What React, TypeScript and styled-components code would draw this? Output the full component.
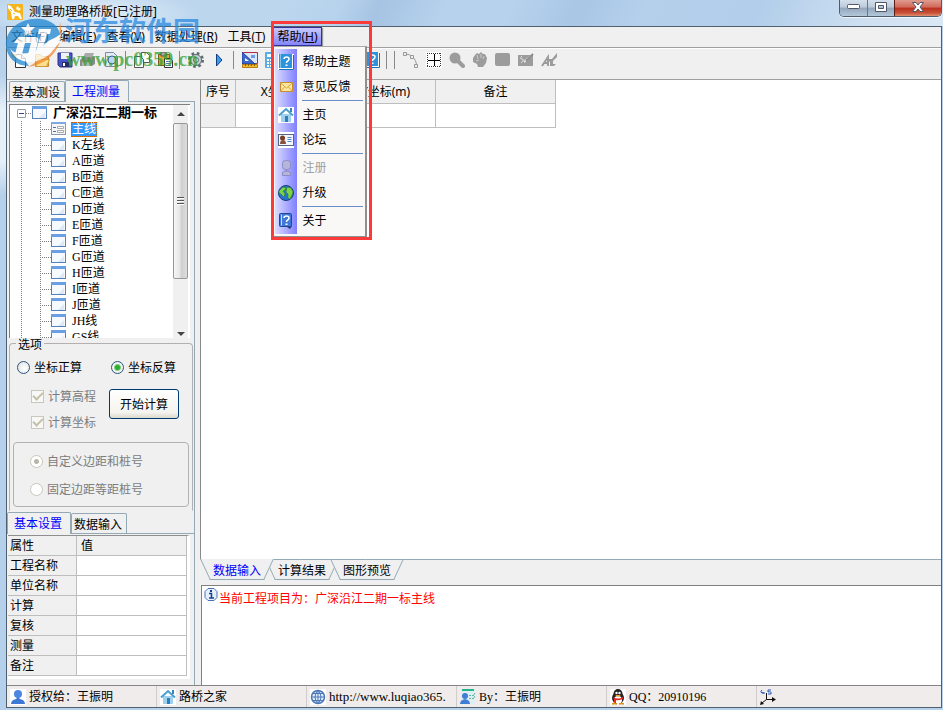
import React from "react";
import styled, { createGlobalStyle, css } from "styled-components";

const song = `"Liberation Serif", "Noto Sans CJK SC", serif`;
const hei = `"Noto Sans CJK SC", sans-serif`;
const ui = `"Noto Sans", "Noto Sans CJK SC", sans-serif`;
const face = "#f0f0f0";
const edge = "#93a9b5";

const Global = createGlobalStyle`
  * { box-sizing: border-box; }
  html, body { margin: 0; padding: 0; }
  body { font: 12px/16px ${ui}; color: #000; overflow: hidden; }
  button, input { font: inherit; color: inherit; margin: 0; padding: 0; }
  button { background: none; border: 0; white-space: nowrap; }
  ul { margin: 0; padding: 0; list-style: none; }
  svg { display: block; flex: none; }
`;

/* ---------- window frame ---------- */

const Glass = styled.div`
  position: relative;
  display: flex;
  flex-direction: column;
  height: 100vh;
  padding: 0 1px 2px 6px;
  background:
    linear-gradient(180deg, #b9d1ea00 0 75px, #e6f0f9 110px 160px, #b4d0ea 196px) 0 0 / 6px 100% no-repeat,
    #b9d2eb;
`;

const TitleBar = styled.header`
  display: flex;
  align-items: flex-start;
  height: 26px;
  margin: 0 -1px 0 -6px;
  padding-left: 7px;
  background:
    radial-gradient(ellipse 110px 24px at 90px 14px, #ffffffa0, #ffffff00),
    linear-gradient(115deg, #bcd6ee 0 30%, #b6d2ec 36%, #a6c4e3 40%, #b6d2ec 47%, #b6d2ec 54%, #a9c7e6 61%, #b4d0eb 68%, #b2ceea 80%, #cfe0f1 92%, #dbe8f5);
`;

const Title = styled.h1`
  flex: 1;
  margin: 0;
  padding: 3px 0 0 6px;
  font: 12px/18px ${ui};
`;

const AppLogo = styled.div`
  padding-top: 4px;
`;

const Caption = styled.div`
  display: flex;
  height: 17px;
  margin-right: 1px;
  border: 1px solid #4d5d70;
  border-top: 0;
  border-radius: 0 0 5px 5px;
  overflow: hidden;
  box-shadow: 0 1px 0 #ffffffb0;
`;

const CaptionButton = styled.button<{ $close?: boolean }>`
  display: grid;
  place-items: center;
  width: ${(p) => (p.$close ? 47 : 27)}px;
  padding-bottom: 2px;
  border-left: 1px solid ${(p) => (p.$close ? "#5f1d18" : "#68788c")};
  background: ${(p) =>
    p.$close
      ? "linear-gradient(#e09c8f, #d0695a 45%, #b9301b 50%, #c85038 80%, #e08f70)"
      : "linear-gradient(#d3e0ec, #bccada 45%, #93a6bb 50%, #b4c8db)"};
  &:first-child { border-left: 0; }
`;

const Client = styled.div`
  flex: 1;
  min-height: 0;
  display: flex;
  flex-direction: column;
  border: 1px solid #51606f;
  background: ${face};
`;

/* ---------- menu ---------- */

const MenuBar = styled.nav`
  display: flex;
  height: 21px;
  margin-left: -1px;
  border-bottom: 1px solid #a0a0a0;
`;

const MenuSlot = styled.div<{ $open?: boolean }>`
  position: relative;
  margin-left: ${(p) => (p.$open ? 3 : 0)}px;
`;

const MenuButton = styled.button<{ $open?: boolean }>`
  height: 19px;
  padding: 0 5px;
  line-height: 18px;
  ${(p) =>
    p.$open &&
    css`
      padding: 0 3px;
      border: 1px solid #31319c;
      background: linear-gradient(#c9c9ff, #8484f7);
      box-shadow: 1px 1px 1px #999;
      line-height: 16px;
    `}
`;

const Popup = styled.div`
  position: absolute;
  z-index: 5;
  top: 19px;
  left: 0;
  width: 94px;
  padding: 2px 2px 3px;
  border: 1px solid #a9a9a9;
  border-right: 2px solid #8f8f8f;
  border-bottom: 2px solid #8f8f8f;
  background: linear-gradient(90deg, #dcdcff, #7f7fff) 1px 2px / 22px calc(100% - 4px) no-repeat, #f9f8f7;
`;

const PopupItem = styled.button<{ $off?: boolean }>`
  display: flex;
  align-items: center;
  gap: 8px;
  width: 100%;
  height: 25px;
  padding-left: 2px;
  color: ${(p) => (p.$off ? "#a0a0a0" : "#000")};
`;

const PopupRule = styled.div`
  height: 3px;
  margin-left: 26px;
  background: linear-gradient(#6a8ccb, #6a8ccb) 0 1px / 100% 1px no-repeat;
`;

const Callout = styled.div`
  position: absolute;
  z-index: 6;
  top: -6px;
  left: -2px;
  width: 101px;
  height: 219px;
  border: 3px solid #fb3a3a;
  pointer-events: none;
`;

/* ---------- toolbar ---------- */

const ToolBar = styled.div`
  display: flex;
  align-items: center;
  height: 32px;
  padding-bottom: 8px;
  border-top: 1px solid #fff;
  border-bottom: 1px solid #a0a0a0;
`;

const Tool = styled.button`
  display: grid;
  place-items: center;
  width: 23px;
  height: 22px;
`;

const ToolRule = styled.span`
  width: 8px;
  height: 18px;
  background: linear-gradient(#8a8a8a, #8a8a8a) 3px 0 / 1px 100% no-repeat;
`;

const ToolGap = styled.span`
  width: 76px;
`;

/* ---------- main ---------- */

const Main = styled.main`
  flex: 1;
  min-height: 0;
  display: flex;
`;

const Side = styled.aside`
  display: flex;
  flex-direction: column;
  width: 188px;
  margin-right: 5px;
  border-right: 1px solid ${edge};
`;

const Tabs = styled.div<{ $lower?: boolean }>`
  display: flex;
  align-items: flex-end;
  height: ${(p) => (p.$lower ? 23 : 22)}px;
  padding-left: ${(p) => (p.$lower ? 0 : 2)}px;
  margin-right: ${(p) => (p.$lower ? 0 : -1)}px;
  background: linear-gradient(${edge}, ${edge}) 0 100% / 100% 1px no-repeat ${face};
`;

const Tab = styled.button<{ $on?: boolean }>`
  height: ${(p) => (p.$on ? 22 : 20)}px;
  padding: ${(p) => (p.$on ? "0 8px 1px 6px" : "0 4px 0 2px")};
  margin-bottom: ${(p) => (p.$on ? 0 : 1)}px;
  border: 1px solid ${edge};
  border-bottom: 0;
  border-radius: 2px 2px 0 0;
  background: ${face};
  color: ${(p) => (p.$on ? "#0000ff" : "#000")};
  font-family: ${hei};
`;

const TreeBox = styled.div`
  flex: 1;
  min-height: 0;
  display: flex;
  margin: 2px 4px 0 2px;
  border-left: 1px solid #808080;
  border-top: 1px solid #808080;
  background: #fff;
`;

const Tree = styled.ul`
  flex: 1;
  overflow: hidden;
  font-family: ${song};
`;

const TreeRow = styled.li`
  display: flex;
  align-items: center;
  height: 16px;
`;

const dotsY = "repeating-linear-gradient(180deg, #808080 0 1px, transparent 1px 2px)";
const dotsX = "repeating-linear-gradient(90deg, #808080 0 1px, transparent 1px 2px)";

const Guide = styled.span<{ $kind: "line" | "arm" | "root" }>`
  width: ${(p) => (p.$kind === "line" ? 30 : p.$kind === "arm" ? 11 : 6)}px;
  height: 16px;
  background: ${(p) =>
    p.$kind === "line"
      ? `${dotsY} 11px 0 / 1px 100% no-repeat`
      : p.$kind === "arm"
        ? `${dotsY} 0 0 / 1px 100% no-repeat, ${dotsX} 0 8px / 100% 1px no-repeat`
        : `${dotsX} 0 8px / 100% 1px no-repeat`};
`;

const Expander = styled.button`
  display: grid;
  place-items: center;
  width: 9px;
  height: 9px;
  margin-left: 7px;
  border: 1px solid #8f9aa5;
  border-radius: 1px;
  background: #fff;
  &::after { content: ""; width: 5px; height: 1px; background: #33449a; }
`;

const Node = styled.button<{ $root?: boolean; $on?: boolean }>`
  height: 15px;
  margin-left: 4px;
  padding: 0 1px;
  line-height: 14px;
  ${(p) => p.$root && css`font-weight: 700; font-size: 13px;`}
  ${(p) =>
    p.$on &&
    css`
      background: #3399ff;
      color: #fff;
      outline: 1px dotted #c86400;
      outline-offset: -1px;
    `}
`;

const Scroll = styled.div`
  display: flex;
  flex-direction: column;
  width: 15px;
  margin-right: 2px;
  background: #f0f0f0;
`;

const ScrollButton = styled.button<{ $down?: boolean }>`
  display: grid;
  place-items: center;
  height: ${(p) => (p.$down ? 8 : 18)}px;
  margin-top: ${(p) => (p.$down ? "auto" : 0)};
  &::after {
    content: "";
    border: 4px solid transparent;
    border-${(p) => (p.$down ? "top" : "bottom")}-color: #444;
    border-${(p) => (p.$down ? "bottom" : "top")}-width: 0;
  }
`;

const Thumb = styled.div`
  display: grid;
  place-items: center;
  height: 67%;
  border: 1px solid #989898;
  border-radius: 2px;
  background: linear-gradient(90deg, #f6f6f6, #e6e6e6 45%, #cfcfcf 55%, #dcdcdc);
  &::after {
    content: "";
    width: 7px;
    height: 8px;
    background: repeating-linear-gradient(180deg, #555 0 1px, #fff 1px 2px, transparent 2px 3px);
  }
`;

const Options = styled.fieldset`
  min-width: 0;
  margin: -2px 1px 0 2px;
  padding: 8px 3px 3px;
  border: 1px solid #b5b0b0;
  border-bottom-color: transparent;
  border-radius: 4px 4px 0 0;
  font-family: ${hei};
`;

const Legend = styled.legend`
  margin-left: 3px;
  padding: 0 2px;
  line-height: 15px;
`;

const Inner = styled.fieldset`
  display: flex;
  flex-direction: column;
  gap: 12px;
  margin: 12px 0 0;
  padding: 10px 0 9px 16px;
  border: 1px solid #b5b0b0;
  border-radius: 4px;
`;

const OptionRow = styled.div`
  display: flex;
  justify-content: space-between;
  padding: 0 13px 0 4px;
`;

const OptionBody = styled.div`
  display: flex;
  justify-content: space-between;
  align-items: flex-start;
  margin-top: 13px;
  padding: 0 10px 0 18px;
`;

const Stack = styled.div`
  display: flex;
  flex-direction: column;
  gap: 10px;
`;

const Choice = styled.label<{ $off?: boolean }>`
  display: flex;
  align-items: center;
  gap: 4px;
  height: 16px;
  white-space: nowrap;
  color: ${(p) => (p.$off ? "#7c7c7c" : "#000")};
`;

const Radio = styled.input.attrs({ type: "radio" })`
  appearance: none;
  width: 13px;
  height: 13px;
  border: 1px solid #2b5579;
  border-radius: 50%;
  background: radial-gradient(circle at 60% 60%, #fff, #dcdfe2);
  &:checked { background: radial-gradient(circle, #2eae2e 0 2px, #7fd07f 3px, #f4f4f4 4px); }
  &:disabled { border-color: #c9c7ba; background: #fff; }
  &:disabled:checked { background: radial-gradient(circle, #b9b6a8 0 2px, #fff 3px); }
`;

const Check = styled.input.attrs({ type: "checkbox" })`
  appearance: none;
  display: grid;
  place-items: center;
  width: 13px;
  height: 13px;
  border: 1px solid #c9c7ba;
  background: #f8f8f8;
  &:checked::after {
    content: "";
    width: 8px;
    height: 4px;
    border: solid #c6c1a5;
    border-width: 0 0 2px 2px;
    transform: translateY(-1px) rotate(-45deg);
  }
`;

const Run = styled.button`
  width: 70px;
  height: 30px;
  margin-top: 1px;
  border: 1px solid #003c74;
  border-radius: 3px;
  background: linear-gradient(#fff, #f4f3ee 80%, #dcd8cc);
`;

const Props = styled.table`
  width: 182px;
  margin: 1px 0 6px 1px;
  border: solid #fff;
  border-width: 0 3px 3px 0;
  border-top: 1px solid #8f8f8f;
  border-collapse: separate;
  border-spacing: 0;
  background: #fff;
  table-layout: fixed;
`;

const PropCell = styled.th<{ $value?: boolean; $head?: boolean }>`
  width: ${(p) => (p.$value ? "auto" : "69px")};
  height: 20px;
  padding: 0 ${(p) => (p.$value ? 4 : 2)}px;
  border: solid #bebebe;
  border-width: 0 1px 1px 0;
  background: ${(p) => (p.$value && !p.$head ? "#fff" : face)};
  font-weight: 400;
  line-height: 17px;
  text-align: left;
`;

const PropInput = styled.input`
  display: block;
  width: 100%;
  height: 17px;
  border: 0;
  background: transparent;
`;

/* ---------- work area ---------- */

const Work = styled.section`
  flex: 1;
  min-width: 0;
  display: flex;
  flex-direction: column;
`;

const SheetPane = styled.div`
  flex: 1;
  min-height: 0;
  border-left: 1px solid #8a8a8a;
  background: #fff;
`;

const Sheet = styled.table`
  border-collapse: separate;
  border-spacing: 0;
  table-layout: fixed;
  width: 355px;
`;

const Cell = styled.td<{ $w?: number; $face?: boolean }>`
  width: ${(p) => (p.$w ? `${p.$w}px` : "auto")};
  height: 24px;
  padding: 0;
  border: solid #bebebe;
  border-width: 0 1px 1px 0;
  background: ${(p) => (p.$face ? face : "#fff")};
  font-weight: 400;
  text-align: center;
`;

const PageTabs = styled.div`
  display: flex;
  height: 26px;
  padding-left: 5px;
  background: linear-gradient(${edge}, ${edge}) 0 0 / 100% 1px no-repeat;
`;

const PageTab = styled.button<{ $on?: boolean; $level: number }>`
  position: relative;
  z-index: ${(p) => p.$level};
  isolation: isolate;
  height: 21px;
  margin-right: 1px;
  padding: 0 8px;
  color: ${(p) => (p.$on ? "#0000ff" : "#000")};
  font-family: ${hei};
  &::before, &::after {
    content: "";
    position: absolute;
    z-index: -1;
    inset: 0 40% 0 0;
    border: solid ${edge};
    border-width: ${(p) => (p.$on ? 0 : 1)}px 0 1px 1px;
    background: ${face};
    transform: skewX(25deg);
  }
  &::after {
    inset: 0 0 0 40%;
    border-width: ${(p) => (p.$on ? 0 : 1)}px 1px 1px 0;
    transform: skewX(-25deg);
  }
`;

const Log = styled.div`
  display: flex;
  height: 100px;
  padding: 2px 1px;
  border-left: 1px solid #808080;
  border-top: 1px solid #808080;
  margin-left: 1px;
  background: #fff;
  color: #ff0000;
  font-family: ${hei};
`;

const LogText = styled.p`
  margin: 2px 0 0;
`;

/* ---------- status ---------- */

const Status = styled.footer`
  display: flex;
  height: 22px;
  border-top: 1px solid #858585;
  background: #f0eceb;
  font-family: ${song};
`;

const StatusCell = styled.div<{ $last?: boolean }>`
  display: flex;
  align-items: center;
  gap: 3px;
  flex: ${(p) => (p.$last ? "1" : "0 0 150px")};
  padding-left: 3px;
  overflow: hidden;
  white-space: nowrap;
  border-right: ${(p) => (p.$last ? 0 : 1)}px solid #cfcccb;
`;

const SiteLink = styled.a`
  color: #000;
  font-size: 13px;
  text-decoration: none;
`;

/* ---------- watermark ---------- */

const Mark = styled.div`
  position: absolute;
  z-index: 9;
  top: 13px;
  left: 5px;
  display: flex;
  gap: 3px;
  pointer-events: none;
  opacity: 0.75;
`;

const MarkText = styled.div`
  display: flex;
  flex-direction: column;
  padding-top: 3px;
  font: 700 27px/28px ${hei};
  color: #2a8ae0;
`;

const MarkSite = styled.span`
  padding-left: 1px;
  font: 700 20px/30px "Liberation Serif", serif;
  color: #35a035;
`;

/* ---------- icons ---------- */

type IconName =
  | "new" | "open" | "save" | "print" | "preview" | "copy" | "paste" | "gear" | "play"
  | "design" | "calc" | "help" | "path" | "cross" | "zoom" | "hand" | "rect" | "edit" | "text"
  | "mail" | "home" | "card" | "user" | "globe" | "about" | "window" | "form" | "info"
  | "person" | "web" | "author" | "penguin" | "axes";

const art: Record<IconName, React.ReactNode> = {
  new: <><path d="M4.500 2.500h6l4 4v9h-10z" fill="#fff" stroke="#333" /><path d="M10.500 2.500v4h4" fill="#ddd" stroke="#333" /><path d="M0 0l6 3-1 2 1 4-3-3-2-1z" fill="#f39b2c" /></>,
  open: <><path d="M1.500 2.500h5l2 2h6v10h-13z" fill="#f2c45a" stroke="#c08a30" /><path d="M1.500 14.500l3-7h11l-3 7z" fill="#ffe08a" stroke="#d19a35" /></>,
  save: <><path d="M1 1h14v14H3l-2-2z" fill="#4653c6" stroke="#2a3488" /><path d="M4 1h8v6H4z" fill="#eef2fb" /><path d="M5 10h7v5H5z" fill="#252d6c" /><path d="M6 11h2v3H6z" fill="#fff" /></>,
  print: <><path d="M5 1h9l-2 5H3z" fill="#aaa" /><path d="M0 8l3-3h12v7l-3 2H0z" fill="#8c8c8c" /><path d="M2 10h9v4H2z" fill="#b5b5b5" /></>,
  preview: <><path d="M2.500 0.500h8l4 4v10h-12z" fill="#e3ebf5" stroke="#7b8da5" /><circle cx="9" cy="8" r="4" fill="#b7d8f5" stroke="#3a5f8f" /><path d="M12 11l3 4" stroke="#c99b32" strokeWidth="2" /></>,
  copy: <><path d="M7.500 0.500h5l3 3v7h-8z" fill="#fff" stroke="#555" /><path d="M0.500 4.500h6l3 3v8h-9z" fill="#fff" stroke="#555" /></>,
  paste: <><path d="M1.500 2.500h11v11h-11z" fill="#dca83c" stroke="#7a5a1e" /><path d="M4 0h5v4H4z" fill="#aaa" stroke="#555" /><path d="M7.500 6.500h6l2 2v7h-8z" fill="#fff" stroke="#333" /><path d="M9 9.500h4M9 11.500h5M9 13.500h5" stroke="#5278b6" /></>,
  gear: <><circle cx="8" cy="8" r="6.500" stroke="#5e6a72" strokeWidth="3" strokeDasharray="2.550 2.550" /><circle cx="8" cy="8" r="5.500" fill="#c8d0d6" stroke="#5e6a72" /><circle cx="8" cy="8" r="2.500" fill="#f0f0f0" stroke="#5e6a72" /></>,
  play: <path d="M5.500 2l5.500 6-5.500 6z" fill="#3b9be8" stroke="#123f80" />,
  design: <><path d="M1.500 0.500h14v11h-14z" fill="#dce8fa" stroke="#b52b45" /><path d="M0 0v12h13z" fill="#3c67c9" stroke="#203f91" /><path d="M3 6v3h4z" fill="#fff" /><path d="M9 3h4v3H9z" fill="#6e9ae8" /><path d="M0.500 12.500h15v3h-15z" fill="#f0b92e" stroke="#b57d12" /><path d="M3.500 12v2M6.500 12v2M9.500 12v2M12.500 12v2" stroke="#84560a" /></>,
  calc: <><rect width="15" height="16" rx="1" fill="#56aee5" /><path d="M2 2h11v3H2z" fill="#fff" /><path d="M2 8h11M2 11h11M2 14h11" stroke="#fff" strokeWidth="2" strokeDasharray="2 1" /></>,
  help: <><path d="M0 0h16v16H0z" fill="#fff" /><path d="M1 0h13v14H1z" fill="#2f93db" /><path d="M2.500 0v14" stroke="#7cc3ef" /><path d="M1 15.500h14.500V1" stroke="#1871b5" /><path d="M6 5q0-2 2.500-2T11 5q0 1.200-1.300 2T8.500 9" stroke="#fff" strokeWidth="1.500" /><path d="M7.500 10.500h2v1.500h-2z" fill="#fff" /></>,
  path: <><path d="M2 2q10 0 12 12" stroke="#999" /><path d="M0.500 0.500h3v3h-3zM7.500 3.500h3v3h-3zM11.500 12.500h3v3h-3z" fill="#eee" stroke="#999" /></>,
  cross: <g shapeRendering="crispEdges"><path d="M0 0h16v16H0z" fill="#fff" /><path d="M1 1.500h14M1 14.500h14M1.500 1v14M14.500 1v14" stroke="#333" strokeDasharray="1 1" /><path d="M8.500 2v12M2 8.500h12" stroke="#000" /></g>,
  zoom: <><circle cx="6" cy="6" r="5.500" fill="#9c9c9c" /><path d="M8 8l6 6" stroke="#9c9c9c" strokeWidth="4" strokeLinecap="round" /></>,
  hand: <><path d="M1 6l2-3 2-2 2 1 2-2 2 2h2l2 4-1 5-3 4H6l-1-3-4-2z" fill="#9c9c9c" /><path d="M5 3l1 4M9 2v4M12 4l-1 3M4 9l3-1" stroke="#ccc" /></>,
  rect: <rect y="1" width="15" height="13" rx="2" fill="#9c9c9c" />,
  edit: <><path d="M0 3h15v11H0z" fill="#9c9c9c" /><path d="M4 4q-3 3 0 3t-1 4" stroke="#dedede" /><path d="M6 10l7-6" stroke="#e8e8e8" strokeWidth="2" /><path d="M8 9l7-7" stroke="#8c8c8c" strokeWidth="2" /></>,
  text: <><path d="M1 14l6-9v9M3 11h5" stroke="#9c9c9c" strokeWidth="2" /><path d="M6 12l2-5h3l5-6v4l-4 4v3h3l-2 2H9V9z" fill="#9c9c9c" /></>,
  mail: <><path d="M2.500 3.500h12v9h-12z" fill="#fce7a0" stroke="#c98d28" /><path d="M2.500 4l6 5 6-5M2.500 12.500l4-4.500M14.500 12.500l-4-4.500" stroke="#d9a440" /></>,
  home: <><path d="M0 0h16v16H0z" fill="#fff" /><path d="M3 7h10v8H3z" fill="#9fd0ee" /><path d="M7 9h3v6H7z" fill="#2f7fbd" /><path d="M1 8.500L8 2l7 6.500" stroke="#4a9fd0" strokeWidth="2" /><path d="M12 1h2v4h-2z" fill="#3a83b6" /></>,
  card: <><path d="M0 0h16v16H0z" fill="#fff" /><rect x="0.500" y="2.500" width="15" height="11" fill="#f3f6fb" stroke="#526784" /><circle cx="4.500" cy="6" r="2.500" fill="#7b3b24" /><path d="M2 12q0-4 3-4t3 4z" fill="#8a5140" /><path d="M9.500 5.500h4M9.500 7.500h4M9.500 9.500h4" stroke="#5386c3" /></>,
  user: <><rect x="4.500" y="0.500" width="8" height="9" rx="3" fill="#b5b5dc" stroke="#8c8cc0" /><path d="M8.500 9v3M4.500 15.500v-3l4-2 4 2v3z" fill="#b5b5dc" stroke="#8c8cc0" /></>,
  globe: <><circle cx="8" cy="8" r="7.500" fill="#2474cf" stroke="#143f7a" /><path d="M1 6l4-4 3 1-1 2-2 1 2 3-1 3-3-3-2-1zM9 2l4 1 2 4-1 3-2 4-2-1V9L8 7z" fill="#7ed348" stroke="#2f7f25" strokeWidth="0.600" /></>,
  about: <><path d="M4 13h10l-2 3-3-2H4z" fill="#2c3d74" /><rect x="1.500" y="0.500" width="12" height="13" rx="1" fill="#3f79dc" stroke="#254690" /><path d="M3.500 1.500v11" stroke="#c6dbfb" /><path d="M6 5q0-2 2.500-2T11 5q0 1.200-1.300 2T8.500 9" stroke="#fff" strokeWidth="1.500" /><path d="M7.500 10.500h2v1.500h-2z" fill="#fff" /></>,
  window: <><rect x="0.500" y="1.500" width="14" height="12" fill="#f6fafe" stroke="#5680bd" /><path d="M0 1h15v3H0z" fill="#6b9fe4" /><path d="M7 13l6-6v6z" fill="#dce8f6" /></>,
  form: <><rect x="0.500" y="1.500" width="14" height="12" fill="#f6f6f6" stroke="#8b97aa" /><path d="M0 1h15v2H0z" fill="#7ea8e0" /><path d="M2 6.500h3M2 10.500h3" stroke="#426fc4" /><path d="M6.500 5.500h6v2h-6zM6.500 9.500h6v2h-6z" fill="#fff" stroke="#aaa" /></>,
  info: <><path d="M5 0.500h6l3 3v6l-3 3H5l-3-3v-6z" fill="#e7f0fd" stroke="#4b70b4" strokeLinejoin="round" /><path d="M7 2h2v2H7z" fill="#173f94" /><path d="M6 5.500h2.500V10M6 10h5" stroke="#173f94" strokeWidth="1.500" /></>,
  person: <><path d="M0 0h16v16H0z" fill="#fff" /><circle cx="8" cy="5" r="4" fill="#4b87e0" /><path d="M1 15q0-4 5-5l2-2 2 2q5 1 5 5z" fill="#3c78d4" /></>,
  web: <><path d="M0 0h16v16H0z" fill="#fff" /><circle cx="8" cy="8" r="6.500" fill="#e4eefb" stroke="#4b78b8" strokeWidth="1.500" /><path d="M8 1v14M1 8h14M2.500 4.500h11M2.500 11.500h11M8 1q-6 7 0 14M8 1q6 7 0 14" stroke="#4b78b8" /></>,
  author: <><path d="M1 0h14v15H1z" fill="#dfeef2" /><path d="M2 1h12" stroke="#25b38b" strokeWidth="2" /><path d="M9 6.500h2M9 9.500h2M12 6l1 1 2-3M12 9l1 1 2-3" stroke="#5eb7a5" /><circle cx="5" cy="7" r="3" fill="#3f7ed5" /><path d="M0 15q0-4 5-5 5 1 5 5z" fill="#3f7ed5" /></>,
  penguin: <><path d="M0 0h16v16H0z" fill="#fff" /><ellipse cx="8" cy="9" rx="6" ry="6" fill="#222" /><ellipse cx="8" cy="5" rx="4.500" ry="5" fill="#222" /><ellipse cx="8" cy="11" rx="4" ry="4" fill="#fff" /><circle cx="6.500" cy="4" r="1.200" fill="#fff" /><circle cx="9.500" cy="4" r="1.200" fill="#fff" /><path d="M5 6h6l-3 2z" fill="#f7a51b" /><path d="M3 8q5 3 10 0v2q-5 2-7 1v3H4v-4z" fill="#e22c20" /><path d="M2 15q2-2 5 0zM9 15q3-2 5 0z" fill="#f7a51b" stroke="#d88a10" /></>,
  axes: <><path d="M6.500 4v6.500H15M6.500 10.500L2 14" stroke="#111" /><path d="M1 12l-1 4 4-1zM12 8l4 2.500-4 2.500z" fill="#111" /><path d="M2 1q-3 3 2 3M2 4h3M11 1H8v2q4-1 3 2H8" stroke="#2856b6" /></>,
};

const Icon = ({ name }: { name: IconName }) => (
  <svg width="16" height="16" viewBox="0 0 16 16" fill="none" aria-hidden="true">{art[name]}</svg>
);

const GiraffeLogo = () => (
  <svg width="16" height="16" viewBox="0 0 16 16">
    <rect width="16" height="16" rx="1" fill="#f5b51c" />
    <path d="M1 1l3 1 4 6 5 1 2 6h-2l-2-3H8l-1 3H5L4 8 1 4z" fill="#fff" />
    <path d="M10 2l4 3-2 2-3-2z" fill="#fff6da" />
    <path d="M3 5l2 2M6 9l2 1" stroke="#f5b51c" />
  </svg>
);

const MarkLogo = () => (
  <svg width="57" height="56" viewBox="0 0 57 56">
    <path d="M55 9C61 30 47 51 23 54C34 48 39 42 41 33L54 27z" fill="#f28a35" />
    <path d="M1 33C0 16 16 4 36 6C46 7 54 13 55 22C48 27 42 26 40 33C38 39 26 42 15 40L24 53C10 53 2 44 1 33z" fill="#1d86d2" />
    <path d="M5 35C8 43 28 42 37 35C40 27 50 28 56 20L55 29C48 36 46 45 28 49C16 50 8 44 5 35z" fill="#fff" />
    <path d="M23 10l2 4 5 0-4 4 1 5-4-2-4 2 1-5-4-4h5z" fill="#fff" />
    <path d="M13 24H30C33 24 34 26 33 29L30 41H23L26 30H20L17 41H10L13 30H9z" fill="#fff" />
    <path d="M34 16H46L45 21H42L37 38H31L36 21H33z" fill="#fff" />
  </svg>
);

/* ---------- data ---------- */

const menus = [["文件", "F"], ["编辑", "E"], ["查看", "V"], ["数据处理", "R"], ["工具", "T"], ["帮助", "H"]];

const helpGroups: { icon: IconName; label: string; off?: boolean }[][] = [
  [{ icon: "help", label: "帮助主题" }, { icon: "mail", label: "意见反馈" }],
  [{ icon: "home", label: "主页" }, { icon: "card", label: "论坛" }],
  [{ icon: "user", label: "注册", off: true }, { icon: "globe", label: "升级" }],
  [{ icon: "about", label: "关于" }],
];

const tools: (IconName | "|" | " ")[] = [
  "new", "open", "save", "print", "preview", "|", "copy", "paste", "|", "gear", "play", "|",
  "design", "calc", " ", "help", "|", "|", "path", "cross", "zoom", "hand", "rect", "edit", "text",
];

const routes = ["主线", "K左线", "A匝道", "B匝道", "C匝道", "D匝道", "E匝道", "F匝道", "G匝道", "H匝道", "I匝道", "J匝道", "JH线", "GS线"];
const properties = ["工程名称", "单位名称", "计算", "复核", "测量", "备注"];

export default function App() {
  return (
    <Glass>
      <Global />
      <TitleBar>
        <AppLogo><GiraffeLogo /></AppLogo>
        <Title>测量助理路桥版[已注册]</Title>
        <Caption>
          <CaptionButton aria-label="最小化">
            <svg width="13" height="6"><rect x="0.500" y="0.500" width="12" height="4" rx="1" fill="#fff" stroke="#535666" /></svg>
          </CaptionButton>
          <CaptionButton aria-label="最大化">
            <svg width="12" height="10"><path fillRule="evenodd" d="M0.500 0.500h11v9h-11zM3.500 3.500h5v3h-5z" fill="#fff" stroke="#535666" /></svg>
          </CaptionButton>
          <CaptionButton $close aria-label="关闭">
            <svg width="12" height="10"><path d="M0.500 0.500h3.500l2 2.500 2-2.500h3.500l-3.500 4.500 3.500 4.500H8L6 7 4 9.500H0.500L4 5z" fill="#fff" stroke="#535666" /></svg>
          </CaptionButton>
        </Caption>
      </TitleBar>

      <Client>
        <MenuBar>
          {menus.map(([label, key]) => {
            const open = key === "H";
            return (
              <MenuSlot key={key} $open={open}>
                <MenuButton $open={open}>{label}(<u>{key}</u>)</MenuButton>
                {open && (
                  <>
                    <Popup>
                      {helpGroups.map((group, i) => (
                        <React.Fragment key={i}>
                          {i > 0 && <PopupRule />}
                          {group.map((it) => (
                            <PopupItem key={it.label} $off={it.off} disabled={it.off}>
                              <Icon name={it.icon} />{it.label}
                            </PopupItem>
                          ))}
                        </React.Fragment>
                      ))}
                    </Popup>
                    <Callout />
                  </>
                )}
              </MenuSlot>
            );
          })}
        </MenuBar>
        <ToolBar>
          {tools.map((t, i) =>
            t === "|" ? <ToolRule key={i} /> : t === " " ? <ToolGap key={i} /> : <Tool key={i} aria-label={t}><Icon name={t} /></Tool>,
          )}
        </ToolBar>

        <Main>
          <Side>
            <Tabs>
              <Tab>基本测设</Tab>
              <Tab $on>工程测量</Tab>
            </Tabs>
            <TreeBox>
              <Tree>
                <TreeRow>
                  <Expander aria-label="折叠" />
                  <Guide $kind="root" />
                  <Icon name="window" />
                  <Node $root>广深沿江二期一标</Node>
                </TreeRow>
                {routes.map((r, i) => (
                  <TreeRow key={r}>
                    <Guide $kind="line" />
                    <Guide $kind="arm" />
                    <Icon name={i === 0 ? "form" : "window"} />
                    <Node $on={i === 0}>{r}</Node>
                  </TreeRow>
                ))}
              </Tree>
              <Scroll>
                <ScrollButton aria-label="向上" />
                <Thumb />
                <ScrollButton $down aria-label="向下" />
              </Scroll>
            </TreeBox>

            <Options>
              <Legend>选项</Legend>
              <OptionRow>
                <Choice><Radio name="mode" />坐标正算</Choice>
                <Choice><Radio name="mode" defaultChecked />坐标反算</Choice>
              </OptionRow>
              <OptionBody>
                <Stack>
                  <Choice $off><Check defaultChecked disabled />计算高程</Choice>
                  <Choice $off><Check defaultChecked disabled />计算坐标</Choice>
                </Stack>
                <Run>开始计算</Run>
              </OptionBody>
              <Inner>
                <Choice $off><Radio name="stake" defaultChecked disabled />自定义边距和桩号</Choice>
                <Choice $off><Radio name="stake" disabled />固定边距等距桩号</Choice>
              </Inner>
            </Options>

            <Tabs $lower>
              <Tab $on>基本设置</Tab>
              <Tab>数据输入</Tab>
            </Tabs>
            <Props>
              <thead>
                <tr>
                  <PropCell $head>属性</PropCell>
                  <PropCell $head $value>值</PropCell>
                </tr>
              </thead>
              <tbody>
                {properties.map((p) => (
                  <tr key={p}>
                    <PropCell scope="row">{p}</PropCell>
                    <PropCell as="td" $value><PropInput aria-label={p} /></PropCell>
                  </tr>
                ))}
              </tbody>
            </Props>
          </Side>

          <Work>
            <SheetPane>
              <Sheet>
                <thead>
                  <tr>
                    <Cell as="th" $w={35} $face>序号</Cell>
                    <Cell as="th" $w={100} $face>X坐标(m)</Cell>
                    <Cell as="th" $w={100} $face>Y坐标(m)</Cell>
                    <Cell as="th" $w={120} $face>备注</Cell>
                  </tr>
                </thead>
                <tbody>
                  <tr><Cell $face /><Cell /><Cell /><Cell /></tr>
                </tbody>
              </Sheet>
            </SheetPane>
            <PageTabs>
              <PageTab $on $level={3}>数据输入</PageTab>
              <PageTab $level={1}>计算结果</PageTab>
              <PageTab $level={2}>图形预览</PageTab>
            </PageTabs>
            <Log>
              <Icon name="info" />
              <LogText>当前工程项目为：广深沿江二期一标主线</LogText>
            </Log>
          </Work>
        </Main>

        <Status>
          <StatusCell><Icon name="person" />授权给：王振明</StatusCell>
          <StatusCell><Icon name="home" />路桥之家</StatusCell>
          <StatusCell><Icon name="web" /><SiteLink href="#">http://www.luqiao365.</SiteLink></StatusCell>
          <StatusCell><Icon name="author" />By：王振明</StatusCell>
          <StatusCell><Icon name="penguin" />QQ：20910196</StatusCell>
          <StatusCell $last><Icon name="axes" /></StatusCell>
        </Status>
      </Client>

      <Mark>
        <MarkLogo />
        <MarkText>
          河东软件园
          <MarkSite>www.pc0359.cn</MarkSite>
        </MarkText>
      </Mark>
    </Glass>
  );
}
